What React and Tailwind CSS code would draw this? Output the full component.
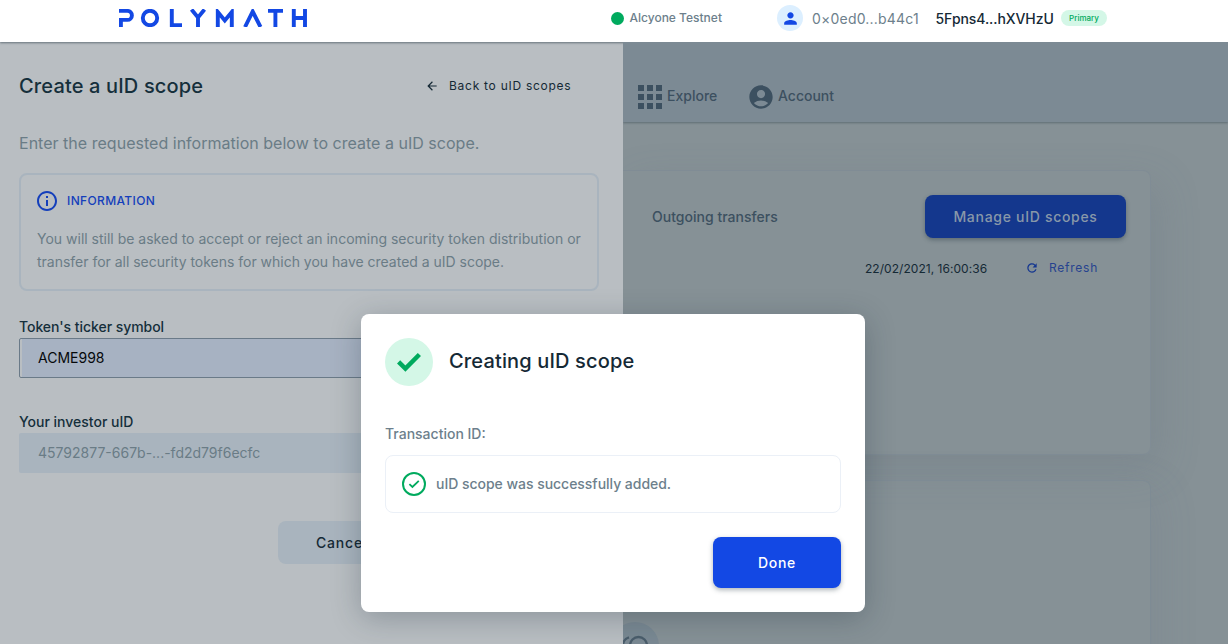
import { MdArrowBack, MdApps, MdAccountCircle, MdPerson, MdInfoOutline, MdRefresh } from "react-icons/md";

function Logo() {
  return (
    <svg className="ml-[119px] mt-[9px] shrink-0" width="188" height="18" viewBox="0 0 188 18" fill="none" stroke="#1348e4" strokeWidth="3.9">
      <path d="M0 1.9H8.4a4 4 0 0 1 0 9H1.9V18" />
      <circle cx="31" cy="9" r="7.2" />
      <path d="M52.8 0V16.1H63" />
      <path d="M72.5 0.5 79 8.5 85.5 0.5M79 8V18" />
      <path d="M98.8 18V3l7 8.5 7-8.5V18" />
      <path d="M126 18 133.7 2.5 141.5 18" />
      <path d="M149 1.9H164M156.4 1.9V18" />
      <path d="M174.8 0V18M186 0V18M174.8 9H186" />
    </svg>
  );
}

function Header() {
  return (
    <header className="relative z-10 flex h-[42px] shrink-0 bg-white shadow-[0_1px_2px_rgba(21,41,53,0.5)]">
      <Logo />
      <div className="ml-[303.5px] flex h-9 items-center">
        <span className="size-[13px] rounded-full bg-[#00aa5e]" />
        <span className="ml-[6px] w-[147.5px] text-[12px] font-medium text-[#6d7f8c]">Alcyone Testnet</span>
        <span className="flex size-[26px] items-center justify-center rounded-full bg-[#dcefff]">
          <MdPerson className="size-[19px] text-[#1348e4]" />
        </span>
        <span className="ml-[9px] mt-[1px] w-[123.5px] text-[14px] tracking-[0.2px] text-[#6d7f8c]">0×0ed0...b44c1</span>
        <span className="mt-[1px] w-[125.5px] text-[14px] font-medium tracking-[-0.08px] text-[#152935]">5Fpns4...hXVHzU</span>
        <span className="flex h-4 w-[46px] items-center justify-center rounded-full bg-[#d4f7e7] text-[8px] font-medium text-[#00aa5e]">Primary</span>
      </div>
    </header>
  );
}

function Drawer() {
  return (
    <aside className="w-[623px] shrink-0 bg-[#b9bec2] pl-[19px] pr-6">
      <div className="flex h-[87px] items-center">
        <h1 className="w-[406px] text-[20px] font-medium tracking-[0.15px] text-[#152f3b]">Create a uID scope</h1>
        <MdArrowBack className="size-[14px] text-[#152935]" />
        <span className="ml-[10px] text-[12px] tracking-[0.73px] text-[#152935]">Back to uID scopes</span>
      </div>
      <p className="mt-[2px] h-[42px] text-[16px] leading-6 tracking-[0.02px] text-[#6a7c86]">Enter the requested information below to create a uID scope.</p>
      <section className="h-[118px] w-[580px] rounded-lg border-2 border-[#a9b4be] px-4 pt-[14px]">
        <div className="flex items-center">
          <MdInfoOutline className="-ml-[2px] size-6 text-[#143fbb]" />
          <span className="ml-2 text-[12px] font-medium tracking-[0.36px] text-[#143fbb]">INFORMATION</span>
        </div>
        <p className="mt-[14px] whitespace-nowrap text-[14px] leading-[23px] text-[#6a7c86]">
          You will still be asked to accept or reject an incoming security token distribution or
          <br />
          <span className="tracking-[-0.015px]">transfer for all security tokens for which you have created a uID scope.</span>
        </p>
      </section>
      <label className="mt-[25px] block text-[14px] font-medium leading-[22px] tracking-[-0.05px] text-[#152f3b]">Token's ticker symbol</label>
      <div className="flex h-10 w-[580px] rounded-[2px] border border-[#6a7a88] pl-[2px]">
        <div className="flex grow items-center bg-[#a7b2c2] pb-[2px] pl-4 text-[14px] text-[#06090b]">ACME998</div>
      </div>
      <label className="mt-[33px] block text-[14px] font-medium leading-[22px] text-[#152f3b]">Your investor uID</label>
      <div className="flex h-10 w-[580px] items-center rounded-[2px] bg-[#a9b4be] pb-[2px] pl-[19px] text-[14px] text-[#6a7c86]">
        45792877-667b-...-fd2d79f6ecfc
      </div>
      <button className="ml-[259px] mt-12 flex h-[43px] w-[126px] items-center rounded-lg bg-[#a9b4be] pl-[38px] text-[14px] font-medium tracking-[0.8px] text-[#152935]">
        Cancel
      </button>
    </aside>
  );
}

function Dashboard() {
  return (
    <main className="flex min-w-0 grow flex-col overflow-hidden bg-[#869196]">
      <nav className="z-10 flex h-20 shrink-0 items-center bg-[#7c8a94] pl-3 pt-7 text-[14px] font-medium text-[#3c5060] shadow-[0_1px_2px_rgba(21,41,53,0.35)]">
        <MdApps className="-ml-[3px] -mr-[1px] mt-[1px] size-[36px] shrink-0" />
        <span className="mb-[2px] w-[80px]">Explore</span>
        <MdAccountCircle className="mt-[1px] size-[28px] shrink-0" />
        <span className="mb-[2px] ml-[3px]">Account</span>
      </nav>
      <section className="mt-12 h-[285px] w-[528px] shrink-0 rounded-r-lg border border-l-0 border-[#808c95] shadow-[8px_14px_40px_rgba(95,108,125,0.22)]">
        <div className="flex items-center pl-[29px] pt-6">
          <span className="w-[273px] text-[14px] font-medium tracking-[0.02px] text-[#3c5060]">Outgoing transfers</span>
          <button className="h-[43px] w-[201px] rounded-lg bg-[#14378d] text-[14px] font-medium tracking-[0.7px] text-[#8898a9] shadow-[0_2px_4px_rgba(21,41,53,0.35)]">Manage uID scopes</button>
        </div>
        <div className="flex items-center pl-[242px] pt-5 text-[12px]">
          <span className="mt-[2px] w-[160px] tracking-[0.04px] text-[#152935]">22/02/2021, 16:00:36</span>
          <MdRefresh className="size-[14px] text-[#143690]" />
          <span className="ml-[10px] tracking-[0.75px] text-[#26438f]">Refresh</span>
        </div>
      </section>
      <section className="mt-[25px] h-[300px] w-[528px] shrink-0 rounded-r-lg border border-l-0 border-[#7e8b94] pt-[141px] shadow-[8px_8px_40px_rgba(95,108,125,0.14)]">
        <div className="-ml-[12px] size-12 rounded-full bg-[#7a8993]">
          <svg className="size-12" viewBox="0 0 48 48" fill="none" stroke="#4a5d6b" strokeWidth="2.4">
            <circle cx="27.5" cy="23.5" r="8.5" />
            <path d="M18 15.4a8.5 8.5 0 0 0-6 8" />
          </svg>
        </div>
      </section>
    </main>
  );
}

function Modal() {
  return (
    <div className="absolute left-[361px] top-[314px] z-20 h-[298px] w-[504px] rounded-lg bg-white p-6 shadow-[0_6px_30px_rgba(21,41,53,0.28)]">
      <div className="flex items-center">
        <span className="flex size-12 items-center justify-center rounded-full bg-[#d4f7e7]">
          <svg className="size-6" viewBox="0 0 24 24" fill="none" stroke="#00aa5e" strokeWidth="4.5">
            <path d="M1.6 11.8 8.4 18.5 22.4 4.5" />
          </svg>
        </span>
        <h2 className="mb-[2px] ml-4 text-[20px] font-medium tracking-[0.15px] text-[#152935]">Creating uID scope</h2>
      </div>
      <p className="mt-[37px] text-[14px] font-medium leading-[22px] text-[#6d7f8c]">Transaction ID:</p>
      <div className="mt-[10px] flex h-[58px] items-center rounded-lg border border-[#ebf0f7] pl-4">
        <span className="flex size-6 items-center justify-center rounded-full border-2 border-[#00aa5e]">
          <svg className="size-3" viewBox="0 0 12 12" fill="none" stroke="#00aa5e" strokeWidth="1.8">
            <path d="M1.4 6.2 4.4 9 10.8 2.8" />
          </svg>
        </span>
        <span className="mb-[2px] ml-[10px] text-[14px] font-medium tracking-[-0.03px] text-[#6d7f8c]">uID scope was successfully added.</span>
      </div>
      <button className="ml-auto mt-6 block h-[51px] w-32 rounded-lg bg-[#1348e4] text-[14px] font-medium tracking-[0.7px] text-white shadow-[0_2px_5px_rgba(21,41,53,0.35)]">Done</button>
    </div>
  );
}

export default function App() {
  return (
    <div className="relative flex h-[644px] w-[1228px] flex-col overflow-hidden font-['Inter',sans-serif]">
      <Header />
      <div className="flex min-h-0 grow">
        <Drawer />
        <Dashboard />
      </div>
      <Modal />
    </div>
  );
}
